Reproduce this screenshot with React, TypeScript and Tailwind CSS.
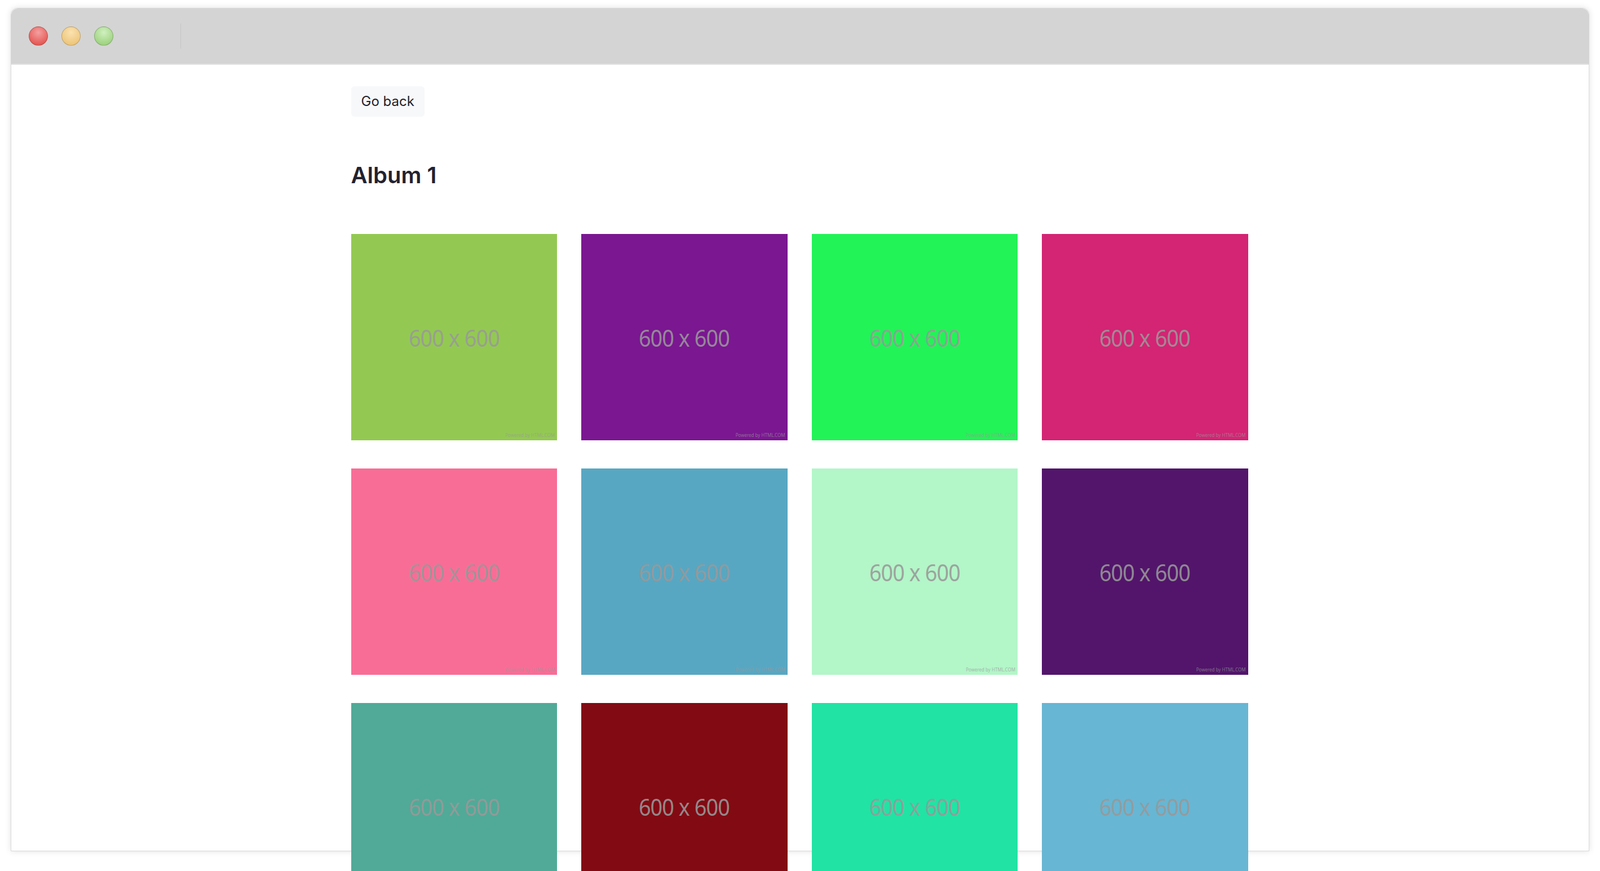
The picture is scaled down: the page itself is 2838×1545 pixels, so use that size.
const tiles = [
  '#93c952', '#7a1791', '#22f357', '#d42474',
  '#f86d96', '#58a7c2', '#b3f6c8', '#52156b',
  '#50aa97', '#820a13', '#21e3a4', '#67b6d3',
];

function Dot({ from, to }: { from: string; to: string }) {
  return (
    <span
      className="w-[34px] h-[34px] rounded-full border border-black/20"
      style={{ background: `radial-gradient(circle at 50% 30%, ${from}, ${to})` }}
    />
  );
}

export default function App() {
  return (
    <div className="h-[1545px] overflow-hidden bg-white pt-[14px] px-[19px] font-[family-name:'Liberation_Sans',Arial,sans-serif]">
      <div className="h-[1496px] rounded-t-xl border border-[#d8d8d8] shadow-[0_0_12px_rgba(0,0,0,0.12)] bg-white">
        {/* TITLE BAR */}
        <div className="h-[100px] bg-[#d4d4d4] rounded-t-xl border-b-2 border-[#e2e2e2] flex items-center pl-[31px] gap-[24px]">
          <Dot from="#f4a0a0" to="#e0443e" />
          <Dot from="#fbe2b0" to="#e9bd6a" />
          <Dot from="#d0f0c0" to="#8fca6c" />
          <span className="ml-[95px] w-px h-[44px] bg-[#c4c4c4]" />
        </div>

        {/* CONTENT */}
        <div className="max-w-[1593px] mx-auto pt-[38px] pr-[2px]">
          <button className="h-[54px] px-[18px] rounded-md bg-[#f7f8fa] text-[24px] text-[#1f1f2e] font-[family-name:Inter,sans-serif]">
            Go back
          </button>
          <h2 className="mt-[84px] text-[40px] font-semibold text-[#22222f] font-[family-name:Inter,sans-serif] leading-none">
            Album 1
          </h2>
          <div className="mt-[84px] grid grid-cols-4 gap-x-[43px] gap-y-[50px]">
            {tiles.map((c, i) => (
              <div
                key={i}
                className="relative h-[366px] flex items-center justify-center"
                style={{ backgroundColor: c }}
              >
                <span className="text-[42px] text-[#999999]/90 tracking-tight scale-x-90">600 x 600</span>
                <span className="absolute right-[4px] bottom-[3px] text-[8px] text-[#999999]/70">
                  Powered by HTML.COM
                </span>
              </div>
            ))}
          </div>
        </div>
      </div>
    </div>
  );
}
